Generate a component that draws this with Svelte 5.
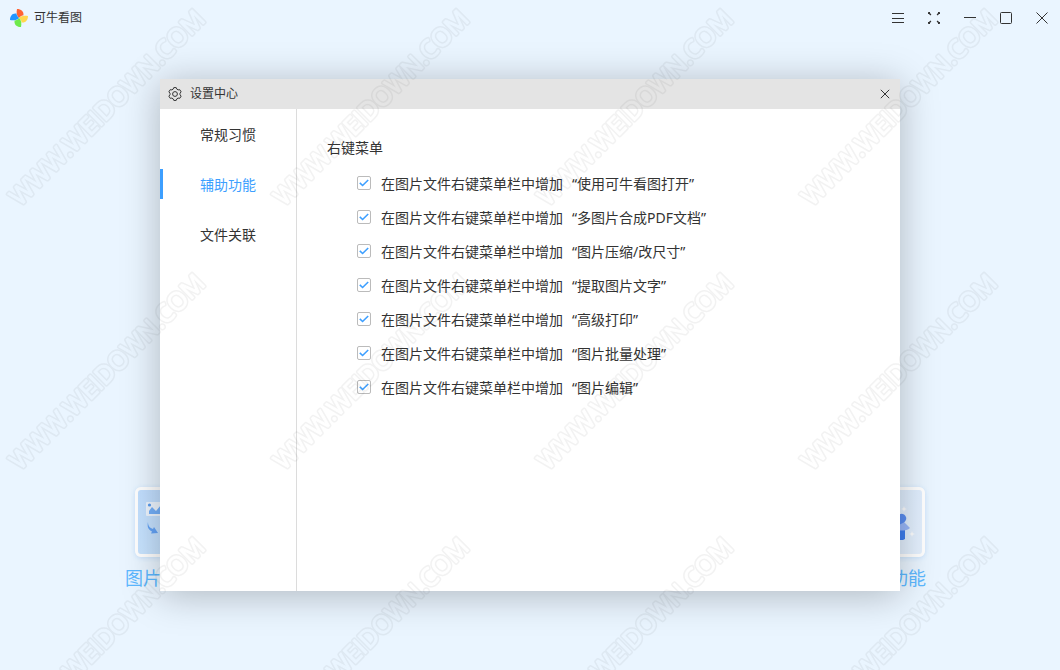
<script>
  const tabs = ['常规习惯', '辅助功能', '文件关联'];
  let activeTab = $state('辅助功能');

  // Entries that can be registered in the system context menu.
  let menuItems = $state([
    { id: 'open', name: '使用可牛看图打开', checked: true },
    { id: 'pdf', name: '多图片合成PDF文档', checked: true },
    { id: 'resize', name: '图片压缩/改尺寸', checked: true },
    { id: 'ocr', name: '提取图片文字', checked: true },
    { id: 'print', name: '高级打印', checked: true },
    { id: 'batch', name: '图片批量处理', checked: true },
    { id: 'edit', name: '图片编辑', checked: true }
  ]);
</script>

<div class="window">
  <header class="titlebar">
    <div class="brand">
      <svg width="18" height="18" viewBox="0 0 18 18">
        <path d="M7 0C11 0 14.200 2.400 13.400 6.600C12.500 6.400 11 6.800 9 9C6.600 7 6.200 3.500 7 0Z" fill="#ff6333" />
        <path d="M18 7C18 11 15.600 14.200 11.400 13.400C11.600 12.500 11.200 11 9 9C11 6.600 14.500 6.200 18 7Z" fill="#ffd84d" />
        <path d="M11 18C7 18 3.800 15.600 4.600 11.400C5.500 11.600 7 11.200 9 9C11.400 11 11.800 14.500 11 18Z" fill="#6eea4c" />
        <path d="M0 11C0 7 2.400 3.800 6.600 4.600C6.400 5.500 6.800 7 9 9C7 11.400 3.500 11.800 0 11Z" fill="#2196ff" />
      </svg>
      <span>可牛看图</span>
    </div>
    <div class="window-buttons">
      <button type="button" aria-label="菜单">
        <svg width="14" height="14" viewBox="0 0 14 14"><path d="M1 2.500h12M1 7.500h12M1 11.500h12" /></svg>
      </button>
      <button type="button" aria-label="全屏">
        <svg width="14" height="14" viewBox="0 0 14 14">
          <path d="M1.500 3V1.500H3M11 1.500h1.500V3M12.500 11v1.500H11M3 12.500H1.500V11" />
          <path d="M1.500 1.500l2.400 2.400M12.500 1.500l-2.400 2.400M12.500 12.500l-2.400-2.400M1.500 12.500l2.400-2.400" stroke-width="1.400" />
        </svg>
      </button>
      <button type="button" aria-label="最小化">
        <svg width="14" height="14" viewBox="0 0 14 14"><path d="M1 6.500h12" /></svg>
      </button>
      <button type="button" aria-label="最大化">
        <svg width="14" height="14" viewBox="0 0 14 14"><rect x="1.500" y="1.500" width="11" height="11" rx="1" /></svg>
      </button>
      <button type="button" aria-label="关闭">
        <svg width="14" height="14" viewBox="0 0 14 14"><path d="M1.500 1.500l11 11M12.500 1.500l-11 11" /></svg>
      </button>
    </div>
  </header>

  <main class="home">
    <div class="shortcuts">
      <div class="shortcut">
        <div class="tile">
          <svg width="64" height="64" viewBox="0 0 64 64">
            <rect x="8" y="12" width="22" height="14" rx="1" fill="#eef6ff" />
            <circle cx="11.500" cy="15" r="1.600" fill="#5a9df0" />
            <path d="M11 24v-3l3-4 4 4 5-6 5 4v5z" fill="#74b0fa" />
            <path d="M10 32c0 4 2 6 5 7l1-2 4 6-7 .5 1-2c-4-2-5-5-4-9.500z" fill="#64a4f8" />
          </svg>
        </div>
        <span class="caption">图片</span>
      </div>
      <div class="shortcut more">
        <div class="tile">
          <svg width="64" height="64" viewBox="0 0 64 64">
            <path d="M36 39h11v10l-2 1h-9z" fill="#3f7ff0" />
            <path d="M38 33l8-1 6 6c-3 3-9 3-14 2z" fill="#9ab8fa" />
            <path d="M40 26c2-3 6-3 8 1 1 3-1 6-8 8z" fill="#5a8ef2" />
            <path d="M46 16l.8 2.200 2.200.8-2.200.8L46 22l-.8-2.200L43 19l2.200-.8zM54 41l.8 2.200 2.200.8-2.200.8L54 47l-.8-2.200L51 44l2.200-.8z" fill="#fff" />
          </svg>
        </div>
        <span class="caption">功能</span>
      </div>
    </div>
  </main>

  <div class="overlay">
    <section class="dialog" role="dialog" aria-labelledby="dialog-title">
      <header class="dialog-header">
        <svg width="14" height="14" viewBox="0 0 14 14">
          <path d="M5.800.6h2.400l.7 1.600 1.200.7 1.700-.2 1.300 2.100-1.100 1.500v1.400l1.100 1.500-1.300 2.100-1.700-.2-1.200.7-.7 1.600H5.800l-.7-1.600-1.200-.7-1.700.2L.9 9.200 2 7.700V6.300L.9 4.800l1.300-2.100 1.700.2 1.200-.7z" />
          <circle cx="7" cy="7" r="2.400" />
        </svg>
        <h1 id="dialog-title">设置中心</h1>
        <button type="button" class="dialog-close" aria-label="关闭">
          <svg width="10" height="10" viewBox="0 0 10 10"><path d="M.8.8l8.400 8.400M9.200.8L.8 9.200" /></svg>
        </button>
      </header>

      <div class="dialog-body">
        <nav class="tabs">
          {#each tabs as tab}
            <button
              type="button"
              class="tab"
              class:active={tab === activeTab}
              onclick={() => (activeTab = tab)}
            >
              {tab}
            </button>
          {/each}
        </nav>

        <fieldset class="options">
          <legend>右键菜单</legend>
          {#each menuItems as item (item.id)}
            <label class="option">
              <input type="checkbox" bind:checked={item.checked} />
              <span>在图片文件右键菜单栏中增加</span>
              <span class="item-name">“{item.name}”</span>
            </label>
          {/each}
        </fieldset>
      </div>
    </section>
  </div>

  <!-- Repeating diagonal stamp over the whole window -->
  <svg class="watermark" aria-hidden="true">
    <defs>
      <mask id="stamp-outline" maskUnits="userSpaceOnUse" x="0" y="0" width="264" height="264">
        <g transform="translate(20 207) rotate(-45)">
          <text class="stamp outer">WWW.WEIDOWN.COM</text>
          <text class="stamp inner">WWW.WEIDOWN.COM</text>
        </g>
      </mask>
      <pattern id="stamp-tile" width="264" height="264" patternUnits="userSpaceOnUse">
        <rect width="264" height="264" fill="#000" fill-opacity="0.05" mask="url(#stamp-outline)" />
      </pattern>
    </defs>
    <rect width="100%" height="100%" fill="url(#stamp-tile)" />
  </svg>
</div>

<style>
  :global(body) {
    margin: 0;
  }

  .window {
    position: relative;
    display: flex;
    flex-direction: column;
    min-height: 100vh;
    overflow: hidden;
    background: #eaf5ff;
    color: #333;
    font-family: "Noto Sans", "Noto Sans CJK SC", sans-serif;
    font-size: 14px;
    line-height: 20px;
  }

  button {
    padding: 0;
    border: 0;
    background: none;
    color: inherit;
    font: inherit;
    cursor: pointer;
  }

  svg {
    display: block;
  }

  .titlebar {
    display: flex;
    align-items: center;
    justify-content: space-between;
    height: 36px;
    padding-left: 10px;
  }

  .brand {
    display: flex;
    align-items: center;
    gap: 6px;
    font-size: 12px;
  }

  .window-buttons {
    display: flex;
  }

  .window-buttons button {
    display: grid;
    place-items: center;
    width: 36px;
    height: 36px;
  }

  .window-buttons svg,
  .dialog-header svg {
    fill: none;
    stroke: #333;
    stroke-width: 1;
  }

  .home {
    display: flex;
    flex: 1;
    align-items: flex-end;
    justify-content: center;
    padding-bottom: 78px;
  }

  .shortcuts {
    display: flex;
    justify-content: space-between;
    width: 100%;
    max-width: 810px;
  }

  .shortcut {
    display: flex;
    flex-direction: column;
    gap: 7px;
    width: 90px;
  }

  .tile {
    align-self: center;
    border: 3px solid #fff;
    border-radius: 6px;
    background: linear-gradient(#c2dfff, #c8e4ff);
    box-shadow: 0 1px 5px rgba(60, 150, 240, 0.2);
  }

  .more .tile {
    background: linear-gradient(135deg, #dcecfe, #e5f1fe);
  }

  .caption {
    color: #5cb8ff;
    font-size: 18px;
    line-height: 28px;
  }

  .more .caption {
    padding-right: 9px;
    text-align: right;
  }

  .overlay {
    position: absolute;
    inset: 0;
    display: grid;
    grid-template-columns: minmax(0, 740px);
    place-content: center;
  }

  .dialog {
    display: flex;
    flex-direction: column;
    min-height: 512px;
    background: #fff;
    box-shadow: 0 4px 36px rgba(0, 0, 0, 0.26);
  }

  .dialog-header {
    display: flex;
    align-items: center;
    gap: 8px;
    height: 30px;
    padding: 0 5px 0 8px;
    background: #e4e4e4;
  }

  h1 {
    flex: 1;
    margin: 0;
    font-size: 12px;
    font-weight: 400;
  }

  .dialog-close {
    display: grid;
    place-items: center;
    width: 20px;
    height: 30px;
  }

  .dialog-body {
    display: flex;
    flex: 1;
  }

  .tabs {
    display: flex;
    flex: 0 0 136px;
    flex-direction: column;
    gap: 20px;
    padding-top: 10px;
    border-right: 1px solid #dcdcdc;
  }

  .tab {
    height: 30px;
    padding: 2px 3px 0 0;
    border-left: 3px solid transparent;
    line-height: 28px;
  }

  .tab.active {
    border-left-color: #3d9fff;
    color: #3d9fff;
  }

  .options {
    flex: 1;
    min-width: 0;
    margin: 0;
    padding: 29px 30px;
    border: 0;
  }

  legend {
    float: left;
    width: 100%;
    margin-bottom: 8px;
    padding: 0;
  }

  .option {
    display: flex;
    clear: both;
    align-items: center;
    height: 34px;
    padding-left: 30px;
  }

  .option span {
    padding-top: 2px;
  }

  .option input {
    appearance: none;
    box-sizing: border-box;
    width: 14px;
    height: 14px;
    margin: 0 10px 0 0;
    border: 1px solid #bbb;
    border-radius: 2px;
    background: #fff;
  }

  .option input:checked {
    background: url("data:image/svg+xml,%3Csvg xmlns='http://www.w3.org/2000/svg' viewBox='0 0 12 12'%3E%3Cpath d='M1.800 5.800l2.800 2.700L10.200 3' fill='none' stroke='%233d9fff' stroke-width='1.600'/%3E%3C/svg%3E") center / 12px 12px no-repeat #fff;
  }

  .item-name {
    margin-left: 9px;
  }

  .watermark {
    position: absolute;
    inset: 0;
    width: 100%;
    height: 100%;
    pointer-events: none;
  }

  .stamp {
    font-family: "Open Sans", sans-serif;
    font-size: 25px;
    stroke-linejoin: round;
  }

  .stamp.outer {
    fill: #fff;
    stroke: #fff;
    stroke-width: 4px;
  }

  .stamp.inner {
    fill: #000;
    stroke: #000;
    stroke-width: 1px;
  }
</style>
